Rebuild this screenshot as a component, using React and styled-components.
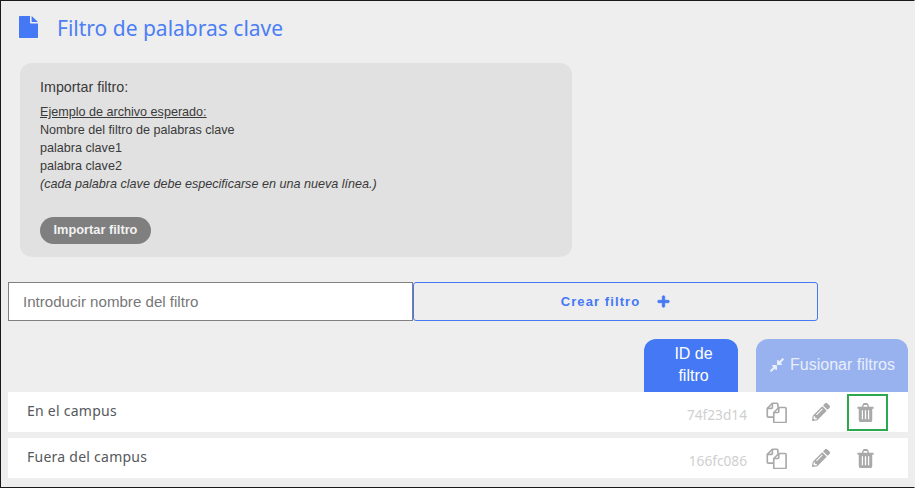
import React from 'react';
import styled, { createGlobalStyle } from 'styled-components';
import { FaPlus, FaCompressAlt, FaPencilAlt } from 'react-icons/fa';

const GlobalStyle = createGlobalStyle`
  html, body {
    margin: 0;
    padding: 0;
    background: #eeeeee;
  }
  * {
    box-sizing: border-box;
  }
`;

const Page = styled.div`
  width: 915px;
  height: 488px;
  background: #eeeeee;
  border: 1px solid #1a1a1a;
  border-right-color: #eeeeee;
  padding: 0 6px 0 7px;
  font-family: 'Liberation Sans', Arial, sans-serif;
  overflow: hidden;
`;

const Header = styled.header`
  display: flex;
  align-items: center;
  height: 52px;
  padding: 2px 0 0 11px;
`;

const FileGlyph = styled.svg`
  width: 19px;
  height: 22px;
  margin-bottom: 2px;
  flex: none;
`;

const Title = styled.h1`
  margin: 0 0 0 19px;
  font-family: 'Noto Sans', sans-serif;
  font-size: 21px;
  font-weight: 400;
  color: #4c7ef5;
`;

const ImportPanel = styled.section`
  width: 552px;
  height: 194px;
  margin: 10px 0 0 12px;
  padding: 16px 20px 0;
  background: #e1e1e1;
  border-radius: 12px;
  color: #3a3a3a;
`;

const PanelHeading = styled.p`
  margin: 0 0 8px;
  font-size: 14.3px;
  line-height: 16px;
`;

const SampleText = styled.div`
  font-size: 12.6px;
  line-height: 18px;
  height: 114px;
`;

const SampleTitle = styled.div`
  text-decoration: underline;
`;

const ImportButton = styled.button`
  display: block;
  width: 111px;
  height: 27px;
  padding: 0 0 3px;
  border: 0;
  border-radius: 14px;
  background: #7f7f7f;
  color: #f2f2f2;
  font-family: inherit;
  font-size: 12.8px;
  font-weight: 700;
`;

const CreateRow = styled.div`
  display: flex;
  margin-top: 25px;
  height: 39px;
`;

const NameInput = styled.input`
  width: 405px;
  height: 39px;
  padding: 0 14px;
  border: 1px solid #808080;
  background: #ffffff;
  font-family: inherit;
  font-size: 15.1px;
  outline: none;

  &::placeholder {
    color: #777777;
    opacity: 1;
  }
`;

const CreateButton = styled.button`
  display: flex;
  align-items: center;
  justify-content: center;
  gap: 17px;
  width: 405px;
  height: 39px;
  padding: 0;
  border: 1px solid #4478f4;
  border-radius: 3px;
  background: transparent;
  color: #4478f4;
  font-family: inherit;
  font-size: 13px;
  font-weight: 700;
  letter-spacing: 1.1px;

  svg {
    stroke: currentColor;
    stroke-width: 30;
  }
`;

const TabRow = styled.div`
  display: flex;
  justify-content: flex-end;
  gap: 18px;
  margin-top: 18px;
  height: 53px;
`;

const Tab = styled.div`
  display: flex;
  align-items: center;
  justify-content: center;
  gap: 5px;
  width: ${(props) => props.$width}px;
  padding: 0 0 2px ${(props) => props.$indent || 0}px;
  border-radius: 12px 12px 0 0;
  background: ${(props) => props.$bg};
  color: ${(props) => props.$fg};
  font-size: 16px;
  line-height: 22px;
  text-align: center;
`;

const Row = styled.div`
  display: flex;
  align-items: center;
  height: 40px;
  margin-bottom: 6px;
  padding-left: 19px;
  background: #ffffff;
`;

const RowName = styled.span`
  flex: 1;
  margin-bottom: 3px;
  font-family: 'Noto Sans', sans-serif;
  font-size: 14px;
  letter-spacing: 0.25px;
  color: #55585c;
`;

const RowId = styled.span`
  margin: 4px 1px 0 0;
  font-family: 'Noto Sans', sans-serif;
  font-size: 13.7px;
  color: #cfcfcf;
`;

const Actions = styled.div`
  display: flex;
  align-items: center;
  width: 160px;
  height: 100%;
  padding-left: 8px;
`;

const ActionCell = styled.div`
  display: flex;
  align-items: center;
  justify-content: center;
  width: ${(props) => props.$width}px;
  height: 37px;
  margin: 0 ${(props) => props.$gap || 0}px;
  padding-right: ${(props) => props.$inset || 0}px;
  color: #a9a9a9;
  border: 2px solid ${(props) => (props.$active ? '#2ea84f' : 'transparent')};
`;

const FileIcon = () => (
  <FileGlyph viewBox="0 0 19 22">
    <path fill="#4478f4" d="M0 .8C0 .4.4 0 .8 0H11v6.6c0 .5.4.9.9.9H19v13.7c0 .4-.4.8-.8.8H.8c-.4 0-.8-.4-.8-.8z" />
    <path fill="#4478f4" d="M12.6 0L19 6h-6.4z" />
  </FileGlyph>
);

const CopyIcon = () => (
  <svg width="21" height="21" viewBox="0 0 23 23" fill="none" stroke="#a9a9a9" strokeWidth="1.8" strokeLinejoin="round">
    <path d="M8 16.5H2.4c-.6 0-1-.4-1-1V7L7 1.4h5c.6 0 1 .4 1 1V6" />
    <path d="M7 1.4V6c0 .6-.4 1-1 1H1.4" />
    <path d="M8.5 11.5L14 6h7c.6 0 1 .4 1 1v14.5c0 .6-.4 1-1 1H9.5c-.6 0-1-.4-1-1z" />
    <path d="M14 6v4.5c0 .6-.4 1-1 1H8.5" />
  </svg>
);

const TrashIcon = () => (
  <svg width="17" height="19" viewBox="0 0 17 20">
    <path
      fill="#a9a9a9"
      fillRule="evenodd"
      d="M0 4h4.6l1-2.6C5.9.6 6.5 0 7.2 0h2.6c.7 0 1.3.6 1.6 1.4l1 2.6H17v2h-1.4v11.8c0 1.2-.8 2.2-1.8 2.2H3.2c-1 0-1.8-1-1.8-2.2V6H0V4zM6.2 4h4.6l-.7-1.9H6.9L6.2 4zM4.6 7.5v9.5h1.3V7.5H4.6zm3.2 0v9.5h1.4V7.5H7.8zm3.3 0v9.5h1.3V7.5h-1.3z"
    />
  </svg>
);

const filters = [
  { name: 'En el campus', id: '74f23d14', active: true },
  { name: 'Fuera del campus', id: '166fc086' },
];

export default function App() {
  return (
    <Page>
      <GlobalStyle />
      <Header>
        <FileIcon />
        <Title>Filtro de palabras clave</Title>
      </Header>
      <ImportPanel>
        <PanelHeading>Importar filtro:</PanelHeading>
        <SampleText>
          <SampleTitle>Ejemplo de archivo esperado:</SampleTitle>
          <div>Nombre del filtro de palabras clave</div>
          <div>palabra clave1</div>
          <div>palabra clave2</div>
          <em>(cada palabra clave debe especificarse en una nueva línea.)</em>
        </SampleText>
        <ImportButton>Importar filtro</ImportButton>
      </ImportPanel>
      <CreateRow>
        <NameInput placeholder="Introducir nombre del filtro" />
        <CreateButton>
          Crear filtro
          <FaPlus size={13} />
        </CreateButton>
      </CreateRow>
      <TabRow>
        <Tab $width={94} $indent={5} $bg="#4478f4" $fg="#ffffff">ID de<br />filtro</Tab>
        <Tab $width={152} $bg="#98b2ef" $fg="#e9eefb">
          <FaCompressAlt size={16} />
          Fusionar filtros
        </Tab>
      </TabRow>
      {filters.map((filter) => (
        <Row key={filter.id}>
          <RowName>{filter.name}</RowName>
          <RowId>{filter.id}</RowId>
          <Actions>
            <ActionCell $width={41}><CopyIcon /></ActionCell>
            <ActionCell $width={46} $gap={2} $inset={2}><FaPencilAlt size={18} /></ActionCell>
            <ActionCell $width={41} $inset={4} $active={filter.active}><TrashIcon /></ActionCell>
          </Actions>
        </Row>
      ))}
    </Page>
  );
}
